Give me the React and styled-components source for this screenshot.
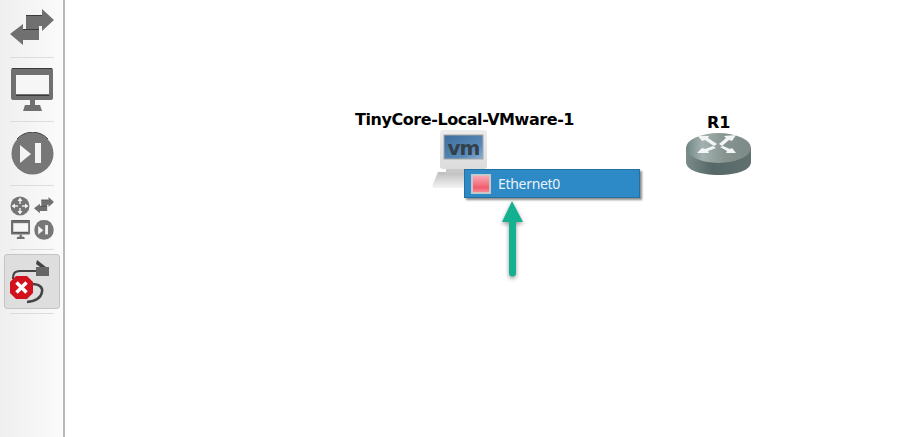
import React from "react";
import styled, { createGlobalStyle } from "styled-components";

const GlobalStyles = createGlobalStyle`
  html, body {
    margin: 0;
    padding: 0;
    background: #fff;
    overflow: hidden;
  }
`;

const Page = styled.div`
  width: 924px;
  height: 437px;
  display: flex;
  background: #fff;
`;

const Toolbar = styled.div`
  width: 62px;
  height: 100%;
  flex-shrink: 0;
  display: flex;
  flex-direction: column;
  align-items: center;
  padding: 1px 0 0 1px;
  box-sizing: content-box;
  background: linear-gradient(90deg, #efefef, #fbfbfb);
  border-right: 2px solid #b9b9b9;
`;

const ToolButton = styled.div`
  width: 56px;
  height: ${({ $h }) => $h || 55}px;
  flex-shrink: 0;
  box-sizing: border-box;
  display: flex;
  align-items: center;
  justify-content: center;
  border-radius: 3px;
  border: 1px solid ${({ $active }) => ($active ? "#c4c4c4" : "transparent")};
  background: ${({ $active }) => ($active ? "#dedede" : "transparent")};
`;

const Separator = styled.div`
  width: 44px;
  height: 1px;
  flex-shrink: 0;
  margin: 4px 0;
  background: #dcdcdc;
`;

const Canvas = styled.div`
  position: relative;
  flex: 1;
  height: 100%;
  background: #fff;
`;

const NodeLabel = styled.div`
  position: absolute;
  left: ${({ $x }) => $x}px;
  top: ${({ $y }) => $y}px;
  font-family: "DejaVu Sans", sans-serif;
  font-weight: 700;
  font-size: 16px;
  letter-spacing: ${({ $spacing }) => $spacing || 0}px;
  line-height: 20px;
  color: #000;
  white-space: nowrap;
`;

const NodeIcon = styled.svg`
  position: absolute;
  left: ${({ $x }) => $x}px;
  top: ${({ $y }) => $y}px;
`;

const Menu = styled.div`
  position: absolute;
  left: 399px;
  top: 169px;
  width: 176px;
  height: 29px;
  box-sizing: border-box;
  display: flex;
  align-items: center;
  gap: 7px;
  padding-left: 6px;
  background: #2e8ac6;
  border: 1px solid #24709f;
  box-shadow: 2px 2px 2px rgba(0, 0, 0, 0.45);
`;

const MenuSwatch = styled.div`
  width: 20px;
  height: 20px;
  box-sizing: border-box;
  border: 2px solid #c8c8c8;
  background: linear-gradient(180deg, #f7a8b2 0%, #f4707f 55%, #f25a6c 70%, #f58a98 100%);
`;

const MenuLabel = styled.span`
  font-family: "Noto Sans", sans-serif;
  font-size: 14px;
  letter-spacing: -0.3px;
  color: #e8f2f9;
`;

const Arrow = styled.svg`
  position: absolute;
  left: 436px;
  top: 198px;
  filter: drop-shadow(0 2px 2px rgba(0, 0, 0, 0.4));
`;

const AllDevicesGrid = styled.div`
  display: grid;
  grid-template-columns: 20px 20px;
  column-gap: 4px;
  row-gap: 4px;
  align-items: center;
  justify-items: center;
`;

const LinkSvg = styled.svg`
  margin-left: -1px;
`;

const SwapIcon = ({ size = 44 }) => (
  <svg width={size} height={(size * 36) / 44} viewBox="0 0 44 36">
    <path fill="#707070" d="M16 6H32V0L44 11 32 22V17H29V20H16Z" />
    <path fill="#707070" d="M29 20V31H13V36L0 25 13 15V20Z" />
    <path stroke="#3a3a3a" strokeWidth="1" fill="none" d="M16 6.500H32M13 20.500H29" />
  </svg>
);

const MonitorIcon = ({ size = 42 }) => (
  <svg width={size} height={(size * 43) / 42} viewBox="0 0 42 43">
    <rect x="0" y="0" width="42" height="32" rx="2" fill="#707070" />
    <path stroke="#3a3a3a" strokeWidth="1" d="M1 .500H41" />
    <rect x="5" y="7" width="33" height="19" fill="#f6f6f6" />
    <path stroke="#3a3a3a" strokeWidth="1" d="M5 27.500H38" />
    <path fill="#707070" d="M19 32H24V37H29L31 43H12L14 37H19Z" />
  </svg>
);

const SkipIcon = ({ size = 43 }) => (
  <svg width={size} height={size} viewBox="0 0 43 43">
    <circle cx="21.500" cy="21.500" r="21" fill="#777" />
    <path fill="none" stroke="#3a3a3a" strokeWidth="1" d="M6 7A21 21 0 0 1 37 7" />
    <path fill="#f4f4f4" d="M9 13L20 22 9 31Z" />
    <rect x="24" y="11" width="6" height="20" fill="#f4f4f4" />
  </svg>
);

const RouterSmall = () => (
  <svg width="20" height="20" viewBox="0 0 20 20">
    <circle cx="10" cy="10" r="9.500" fill="#747474" />
    <path stroke="#e8e8e8" strokeWidth="1.500" d="M10 4V8M10 12V16M4 10H8M12 10H16" />
    <path fill="#f4f4f4" d="M10 1.500L12.500 5H7.500ZM10 18.500L7.500 15H12.500ZM1.500 10L5 7.500V12.500ZM18.500 10L15 12.500V7.500Z" />
  </svg>
);

const AddLinkIcon = () => (
  <LinkSvg width="44" height="44" viewBox="0 0 44 44">
    <path fill="none" stroke="#444" strokeWidth="2.200" d="M26 11H10C4 11 3 14 3 19" />
    <path fill="none" stroke="#444" strokeWidth="2.500" d="M22 24C30 24 33 28 32 32 31 38 26 41 17 42" />
    <path fill="#666" d="M26 7H39V16H26Z" />
    <path fill="#444" d="M27 0L36 7H30L26 4Z" />
    <path fill="#d1121c" d="M6 16H17L23 22V33L17 39H6L0 33V22Z" />
    <path stroke="#fff" strokeWidth="3.500" d="M6.500 22.500L16.500 32.500M16.500 22.500L6.500 32.500" />
  </LinkSvg>
);

const VmIcon = () => (
  <NodeIcon $x={367} $y={129} width="66" height="62" viewBox="0 0 66 62">
    <defs>
      <linearGradient id="screenGrad" x1="0" y1="0" x2="1" y2="1">
        <stop offset="0" stopColor="#3c6d9d" />
        <stop offset="0.7" stopColor="#5a8bb8" />
        <stop offset="1" stopColor="#8cb0d0" />
      </linearGradient>
      <linearGradient id="caseGrad" x1="0" y1="0" x2="0" y2="1">
        <stop offset="0" stopColor="#ececec" />
        <stop offset="1" stopColor="#dcdcdc" />
      </linearGradient>
      <linearGradient id="baseGrad" x1="0" y1="0" x2="0" y2="1">
        <stop offset="0" stopColor="#bdbdbd" />
        <stop offset="1" stopColor="#f4f4f4" />
      </linearGradient>
    </defs>
    <path fill="url(#baseGrad)" d="M6 43H42V59H3C0 59 0 57 1 55Z" />
    <rect x="14" y="38" width="28" height="6" fill="#c8c8c8" />
    <rect x="8" y="1" width="47" height="39" rx="3" fill="url(#caseGrad)" />
    <rect x="12" y="6" width="39" height="24" fill="url(#screenGrad)" stroke="#a8a8a8" />
    <text
      x="31.500"
      y="26"
      textAnchor="middle"
      fontFamily="'DejaVu Sans', sans-serif"
      fontWeight="700"
      fontSize="20"
      letterSpacing="-1"
      fill="#333f4a"
    >
      vm
    </text>
  </NodeIcon>
);

const RouterIcon = () => (
  <NodeIcon $x={620} $y={131} width="68" height="48" viewBox="0 0 68 48">
    <defs>
      <linearGradient id="routerTop" x1="0" y1="0" x2="1" y2="0">
        <stop offset="0" stopColor="#6f8583" />
        <stop offset="0.25" stopColor="#a3b2b0" />
        <stop offset="0.6" stopColor="#86938f" />
        <stop offset="1" stopColor="#7c8a88" />
      </linearGradient>
      <linearGradient id="routerSide" x1="0" y1="0" x2="1" y2="0">
        <stop offset="0" stopColor="#7b8c8a" />
        <stop offset="0.4" stopColor="#566867" />
        <stop offset="1" stopColor="#5f706f" />
      </linearGradient>
    </defs>
    <path fill="url(#routerSide)" d="M1 17V31C1 39 15 44 33.500 44S66 39 66 31V17Z" />
    <ellipse cx="33.500" cy="17" rx="32.500" ry="15" fill="url(#routerTop)" />
    <path
      fill="#f2f5f5"
      d="M13 5H24L23 7 32 13 29 15 20 9 17 10ZM51 4L39 5 41 7 34 13 37 15 44 9 47 10ZM12 22L24 22 23 20 31 17 28 15 20 18 17 17ZM51 22L41 22 42 20 35 16 38 15 45 18 47 17Z"
    />
  </NodeIcon>
);

const App = () => {
  return (
    <>
      <GlobalStyles />
      <Page>
        <Toolbar>
          <ToolButton $h={52}>
            <SwapIcon />
          </ToolButton>
          <Separator />
          <ToolButton>
            <MonitorIcon />
          </ToolButton>
          <Separator />
          <ToolButton>
            <SkipIcon />
          </ToolButton>
          <Separator />
          <ToolButton>
            <AllDevicesGrid>
              <RouterSmall />
              <SwapIcon size={20} />
              <MonitorIcon size={19} />
              <SkipIcon size={20} />
            </AllDevicesGrid>
          </ToolButton>
          <Separator />
          <ToolButton $active>
            <AddLinkIcon />
          </ToolButton>
          <Separator />
        </Toolbar>
        <Canvas>
          <NodeLabel $x={290} $y={110} $spacing={-0.44}>
            TinyCore-Local-VMware-1
          </NodeLabel>
          <VmIcon />
          <NodeLabel $x={642} $y={113}>
            R1
          </NodeLabel>
          <RouterIcon />
          <Menu>
            <MenuSwatch />
            <MenuLabel>Ethernet0</MenuLabel>
          </Menu>
          <Arrow width="24" height="82" viewBox="0 0 24 82">
            <path fill="#14b190" d="M11 3L22 24H15V75A3.500 3.500 0 0 1 8 75V24H1Z" />
          </Arrow>
        </Canvas>
      </Page>
    </>
  );
};

export default App;
